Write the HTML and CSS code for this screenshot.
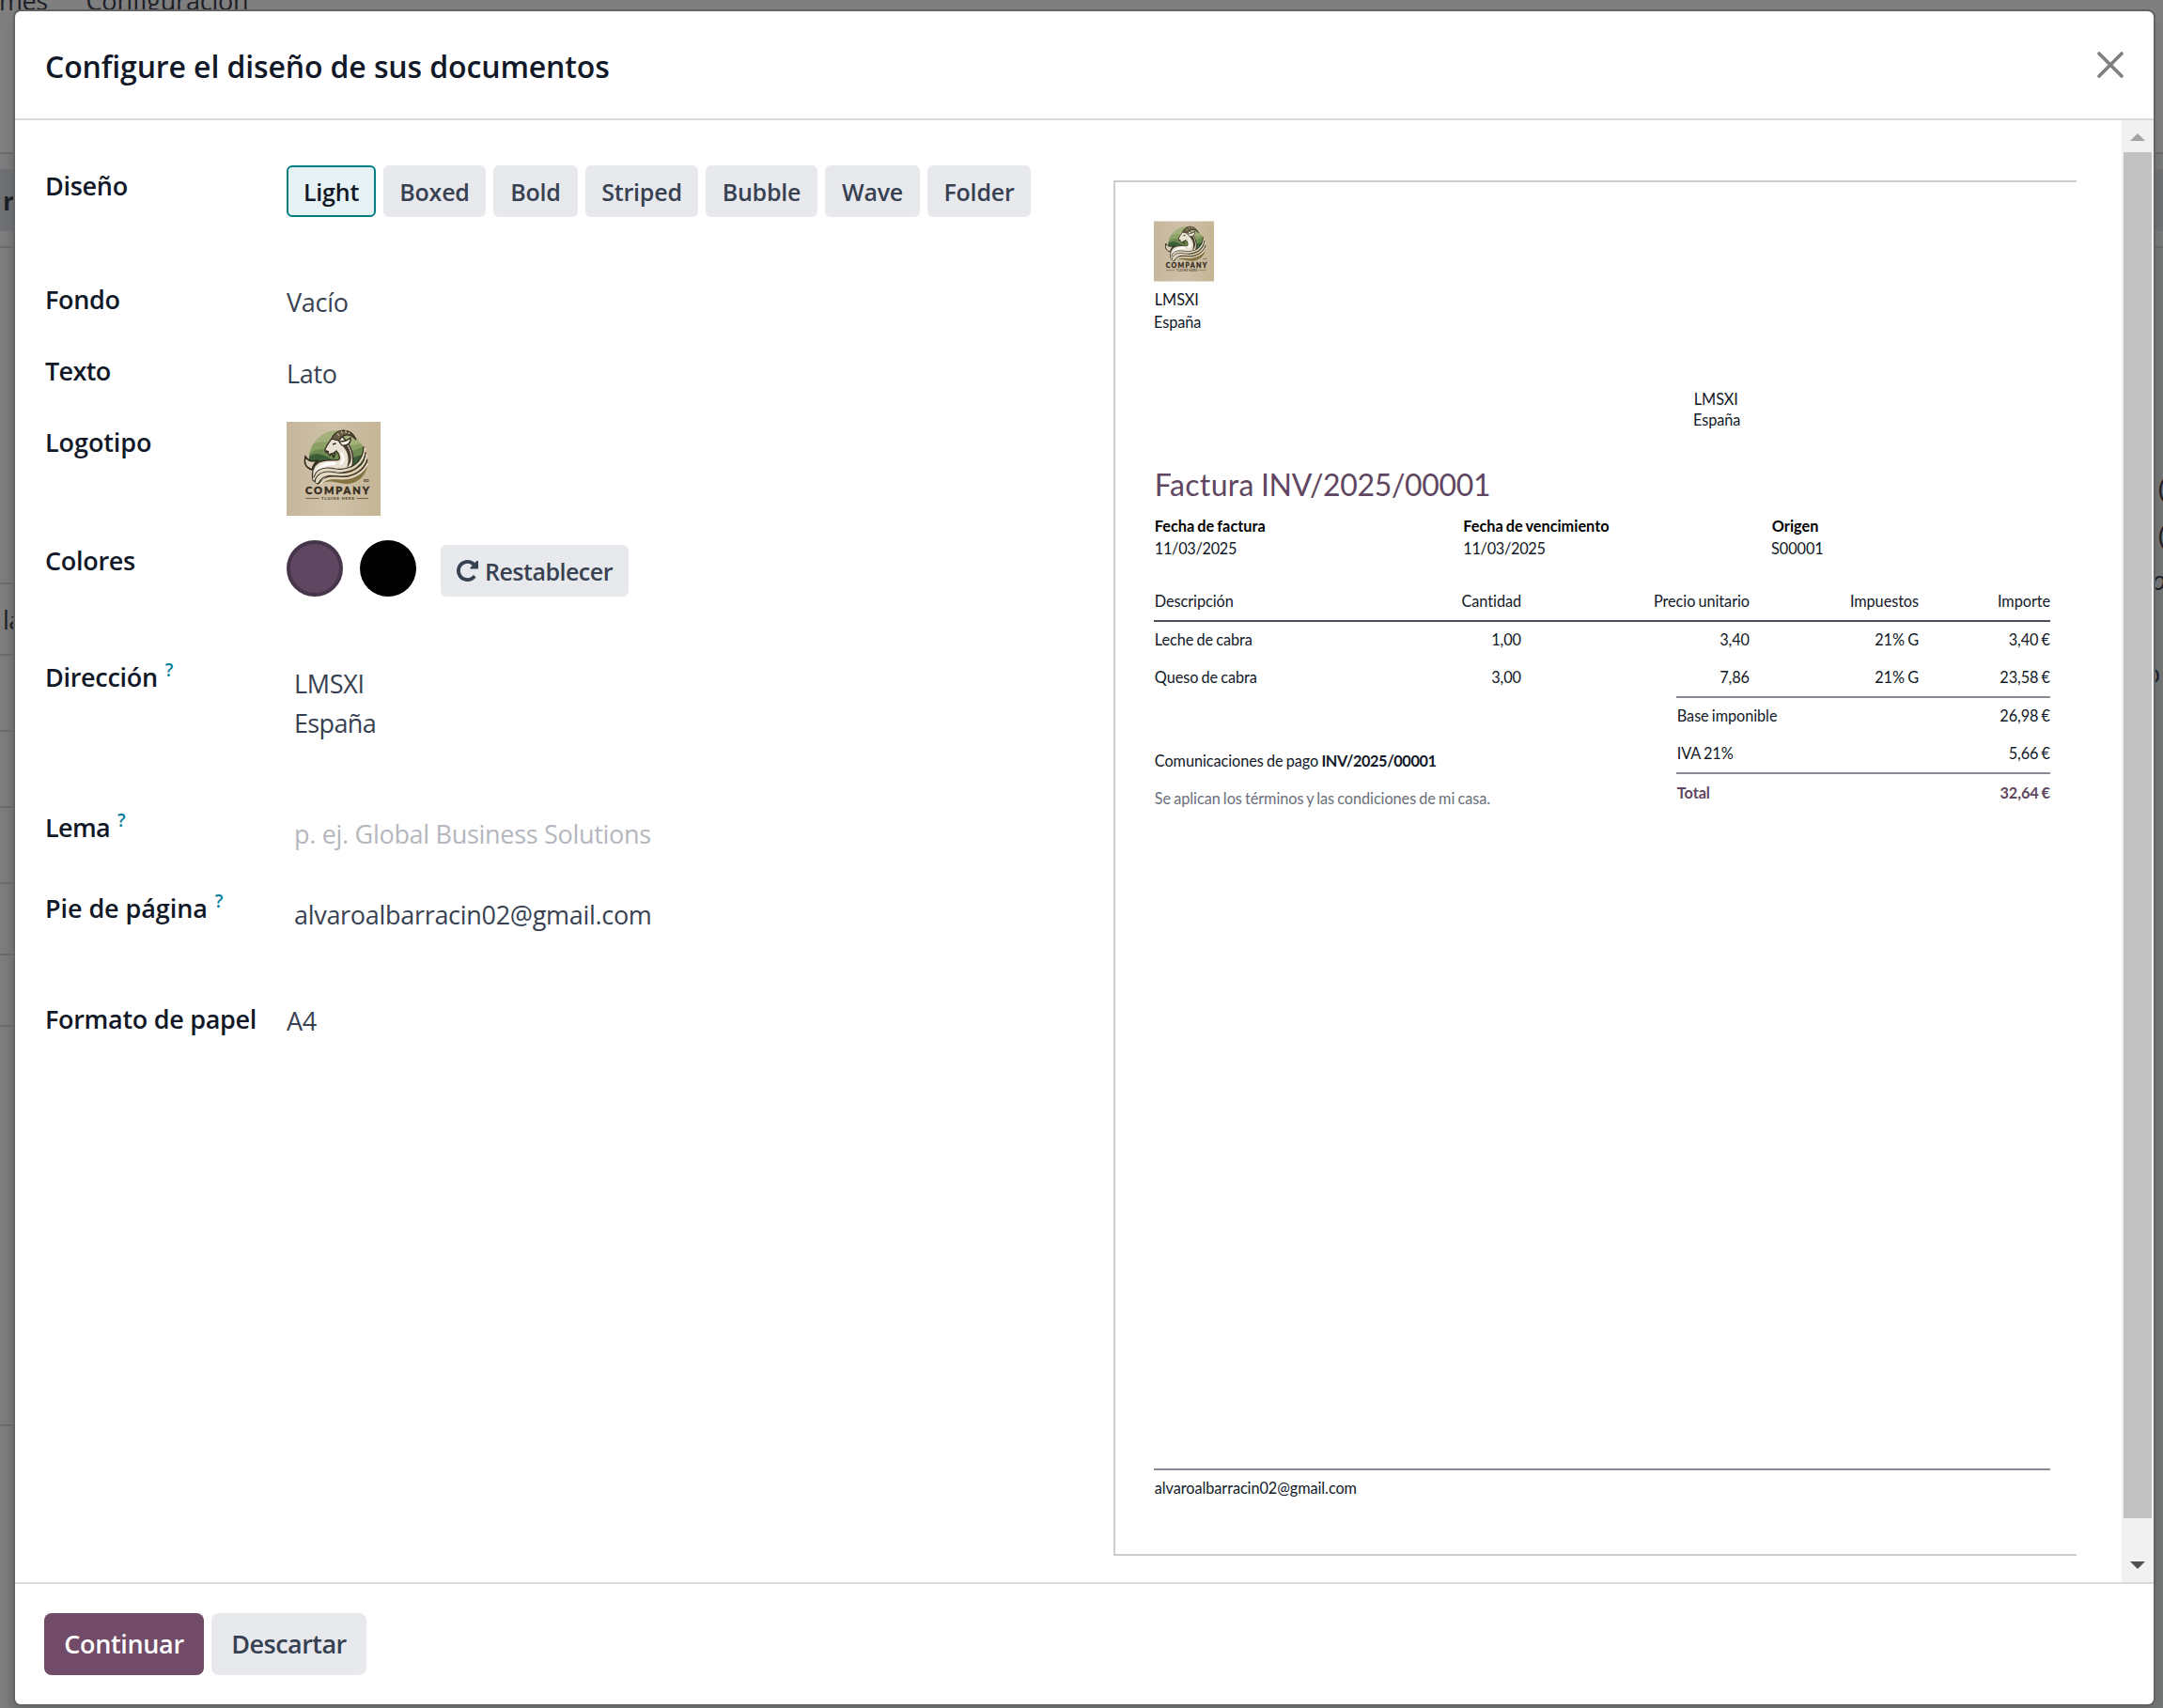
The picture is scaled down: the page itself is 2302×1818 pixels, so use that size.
FILE: index.html
```html
<!DOCTYPE html>
<html lang="es">
<head>
<meta charset="utf-8">
<title>Configure el diseño de sus documentos</title>
<link rel="stylesheet" href="styles.css">
</head>
<body>
<svg class="defs" width="0" height="0" aria-hidden="true">
  <defs>
    <linearGradient id="sand" x1="0" y1="0" x2="1" y2="0">
      <stop offset="0" stop-color="#c6b79c"/><stop offset=".5" stop-color="#cfc1a8"/><stop offset="1" stop-color="#c5b595"/>
    </linearGradient>
    <clipPath id="sun"><circle cx="54" cy="39" r="30"/></clipPath>
    <symbol id="company-logo" viewBox="0 0 100 100">
      <rect width="100" height="100" fill="url(#sand)"/>
      <g clip-path="url(#sun)">
        <rect x="20" y="8" width="70" height="40" fill="#a3b07c"/>
        <path d="M20 28C35 16 50 24 62 25S80 22 90 20V48H20z" fill="#8aa065"/>
        <path d="M20 38C34 22 46 32 60 32S78 26 90 24V48H20z" fill="#6d8a51"/>
        <path d="M20 40C30 30 38 34 48 40S74 34 90 34V48H20z" fill="#3a5f38"/>
      </g>
      <path d="M85 36C90 52 78 67 62 66C52 65 46 61 36 66L34 58L80 46z" fill="#857342"/>
      <path d="M28 62C26 50 30 42 42 41C48 40 54 42 56 40C57 37 56 34 53 31C51 33 49 34 47 34L46 36L44 33C42 33 41 31 41 29C43 25 45 21 49 17C54 13 60 15 63 20C69 27 72 36 70 47C66 54 56 56 46 57L33 66z" fill="#e9e2d3" stroke="#3a3022" stroke-width="1.300"/>
      <path d="M60 26C66 33 67 40 64 49C68 45 70 40 68 33C67 28 64 24 62 22z" fill="#4a3e2d"/>
      <path d="M33 53C36 46 44 44 52 44" fill="none" stroke="#fff" stroke-width="3.500"/>
      <path d="M58 33C62 38 61 42 57 45" fill="none" stroke="#fff" stroke-width="2.200"/>
      <path d="M48 18C52 7 68 5 74 19C68 12 60 12 56 20z" fill="#6a5d45" stroke="#30281c" stroke-width="1.200"/>
      <path d="M54 12l2 3M58 9.500l1.500 3M63 9l0 3M67 11l-1 2" stroke="#d8ccb0" stroke-width="1"/>
      <path d="M56 21C61 21 66 19 68 17C69 22 65 26 59 25z" fill="#f3eee0" stroke="#30281c" stroke-width="1.200"/>
      <path d="M49 24l3.500-1M42 31l3 1M48 34l2 4 2-5" fill="none" stroke="#30281c" stroke-width="1.400"/>
      <path d="M27 51C21 49 18 45 20 37C23 42 27 43 34 41C30 43 28 47 27 51z" fill="#d8ccb5" stroke="#30281c" stroke-width="1.500"/>
      <path d="M29 62C32 50 42 50 52 52C68 54 83 45 83 28M32 65C35 54 44 55 54 56C70 58 84 49 85 35M36 67C39 60 46 59 55 60C70 62 82 54 86 44" fill="none" stroke="#e0d6bf" stroke-width="2.400"/>
      <path d="M29 59C32 48 42 48 52 50C67 52 82 43 82 26M30 63C33 52 43 52 53 54C69 56 84 47 84 32M34 66C37 57 45 57 55 58C70 60 83 52 86 40" fill="none" stroke="#3a3022" stroke-width="1.200"/>
      <text x="20" y="77" textLength="68" class="logo-name">COMPANY</text>
      <text x="37" y="83" textLength="35" class="logo-tag">TLGINE HERE</text>
      <path d="M20.500 81.500H34.500M74.500 81.500H87" stroke="#5a4d38" stroke-width=".8"/>
      <text x="82" y="64" class="logo-mark">EID</text>
    </symbol>
  </defs>
</svg>

<div class="backdrop">
  <div class="bd-nav"><span>mes</span><span>Configuración</span></div>
  <div class="bd-status"><div class="bd-pill bd-pill-l">re</div><div class="bd-pill bd-pill-r"></div></div>
  <div class="bd-sheet">
    <div class="bd-row r1"></div>
    <div class="bd-row r2"><span>la</span></div>
    <div class="bd-row r3"></div>
    <div class="bd-row r4"></div>
    <div class="bd-row r5"></div>
    <div class="bd-row r6"></div>
    <div class="bd-row r7"></div>
    <div class="bd-row r8"></div>
  </div>
  <div class="bd-right"><span>(</span><span>(</span><i>o</i><span class="bd-last">o</span></div>
</div>

<main class="modal">
  <header class="modal-head">
    <h1>Configure el diseño de sus documentos</h1>
    <svg class="close" viewBox="0 0 28 28"><path d="M2 2L26 26M26 2L2 26"/></svg>
  </header>

  <div class="modal-body">
    <section class="form">
      <div class="row row-layout"><label>Diseño</label>
        <div class="choices">
          <button class="btn active">Light</button>
          <button class="btn">Boxed</button>
          <button class="btn">Bold</button>
          <button class="btn">Striped</button>
          <button class="btn">Bubble</button>
          <button class="btn">Wave</button>
          <button class="btn">Folder</button>
        </div>
      </div>
      <div class="row row-plain"><label>Fondo</label><div class="value v3">Vacío</div></div>
      <div class="row row-plain"><label class="tight">Texto</label><div class="value v3">Lato</div></div>
      <div class="row row-logo"><label class="loose">Logotipo</label><svg class="logo-lg"><use href="#company-logo"/></svg></div>
      <div class="row row-colors"><label>Colores</label>
        <div class="colors">
          <span class="swatch primary"></span><span class="swatch secondary"></span>
          <button class="btn reset"><svg viewBox="128 128 1536 1536"><path d="M1664 256v448q0 26-19 45t-45 19h-448q-42 0-59-40-17-39 14-69l138-138Q1097 384 896 384q-104 0-198.500 40.500T534 534 424.500 697.500 384 896t40.500 198.500T534 1258t163.500 109.500T896 1408q119 0 225-52t179-147q7-10 23-12 15 0 25 9l137 138q9 8 9.500 20.500t-7.500 22.500q-109 132-264 204.500T896 1664q-156 0-298-61t-245-164-164-245-61-298 61-298 164-245 245-164 298-61q147 0 284.500 55.500T1425 330l130-129q29-31 70-14 39 17 39 59z"/></svg>Restablecer</button>
        </div>
      </div>
      <div class="row row-address"><label>Dirección<sup>?</sup></label><div class="value inset v7">LMSXI<br><span class="tight">España</span></div></div>
      <div class="row row-tagline"><label class="tight">Lema<sup>?</sup></label><div class="value inset v8 placeholder">p. ej. Global Business Solutions</div></div>
      <div class="row row-footer"><label class="loose">Pie de página<sup>?</sup></label><div class="value inset v7">alvaroalbarracin02@gmail.com</div></div>
      <div class="row"><label>Formato de papel</label><div class="value v2">A4</div></div>
    </section>

    <article class="paper">
      <svg class="logo-sm"><use href="#company-logo"/></svg>
      <address class="company">LMSXI<br>España</address>
      <address class="customer">LMSXI<br>España</address>
      <h2>Factura <span class="doc-number">INV/2025/00001</span></h2>
      <div class="meta">
        <div><b>Fecha de factura</b><span class="date">11/03/2025</span></div>
        <div><b>Fecha de vencimiento</b><span class="date">11/03/2025</span></div>
        <div><b>Origen</b>S00001</div>
      </div>
      <div class="line line-head"><span>Descripción</span><span>Cantidad</span><span>Precio unitario</span><span>Impuestos</span><span>Importe</span></div>
      <div class="line line-first"><span>Leche de cabra</span><span>1,00</span><span>3,40</span><span>21% G</span><span>3,40 €</span></div>
      <div class="line"><span>Queso de cabra</span><span>3,00</span><span>7,86</span><span>21% G</span><span>23,58 €</span></div>
      <div class="summary">
        <div class="notes"><p>Comunicaciones de pago <strong>INV/2025/00001</strong></p><p class="terms">Se aplican los términos y las condiciones de mi casa.</p></div>
        <div class="totals">
          <div class="total-row base"><span>Base imponible</span><span>26,98 €</span></div>
          <div class="total-row"><span>IVA 21%</span><span>5,66 €</span></div>
          <div class="total-row grand"><span>Total</span><span>32,64 €</span></div>
        </div>
      </div>
      <footer>alvaroalbarracin02@gmail.com</footer>
    </article>

    <div class="scrollbar">
      <svg class="arrow up" viewBox="0 0 16 8"><path d="M0 8L8 0L16 8z"/></svg>
      <div class="thumb"></div>
      <svg class="arrow down" viewBox="0 0 16 8"><path d="M0 0L8 8L16 0z"/></svg>
    </div>
  </div>

  <footer class="modal-foot">
    <button class="btn action go">Continuar</button>
    <button class="btn action drop">Descartar</button>
  </footer>
</main>
</body>
</html>
```
FILE: styles.css
```css
* { box-sizing: border-box; }

body {
  margin: 0;
  width: 2302px;
  height: 1818px;
  overflow: hidden;
  position: relative;
  font-family: "Open Sans", "Noto Sans", sans-serif;
  font-size: 27px;
  line-height: 42px;
  color: #374151;
}

h1, h2, p { margin: 0; font-weight: inherit; }
address { font-style: normal; }
.defs { position: absolute; }

/* Dimmed application behind the dialog */
.backdrop {
  position: absolute;
  inset: 0;
  background: linear-gradient(90deg, #7f7f7f 0, #757676 16px, #757776 2292px, #7b7c7c 2302px);
  color: #1d2027;
  letter-spacing: -.5px;
}
.bd-nav {
  display: flex;
  gap: 41px;
  height: 162px;
  background: #7f7f7f;
}
.bd-nav span { margin-top: -20px; height: 42px; }
.bd-nav span:first-child { margin-left: -1px; }
.bd-nav span + span { letter-spacing: -.2px; }
.bd-status {
  display: flex;
  justify-content: space-between;
  height: 102px;
  padding: 16px 0;
  border: solid #6b6c6e;
  border-width: 2px 0;
}
.bd-pill {
  width: 60px;
  height: 66px;
  background: #707175;
  font-weight: 700;
  line-height: 68px;
  padding-left: 3px;
  letter-spacing: -1.500px;
}
.bd-pill-r { width: 9px; border-radius: 6px 0 0 6px; }
.bd-row { border-bottom: 2px solid #6b6c6e; padding-left: 3px; }
.r1 { height: 358px; }
.r2 { height: 76px; line-height: 76px; }
.r3, .r4, .r5 { height: 81px; }
.r6 { height: 76px; }
.r7 { height: 76px; }
.r8 { height: 425px; }
.bd-right {
  position: absolute;
  top: 264px;
  right: 0;
  bottom: 0;
  width: 12px;
  padding-top: 235px;
  overflow: hidden;
  background: #757776;
  display: flex;
  flex-direction: column;
}
.bd-right span, .bd-right i { height: 50px; }
.bd-right i { margin-top: -2px; }
.bd-right span { padding-left: 7px; }
.bd-right .bd-last { margin: 49px 0 0 -14px; }

/* Dialog */
.modal {
  position: absolute;
  left: 16px;
  top: 12px;
  width: 2276px;
  height: 1802px;
  display: flex;
  flex-direction: column;
  background: #fff;
  border-radius: 6px;
  box-shadow: 0 0 0 2px #626363, 0 8px 16px rgba(0, 0, 0, .15);
}
.modal-head {
  display: flex;
  justify-content: space-between;
  align-items: center;
  height: 116px;
  padding: 0 32px;
  border-bottom: 2px solid #d8dadd;
  color: #111827;
}
.modal-head h1 { padding-top: 3px; font-size: 32px; font-weight: 600; line-height: 40px; letter-spacing: -.120px; }
.close { width: 28px; height: 28px; fill: none; stroke: #7f7f7f; stroke-width: 3.600; stroke-linecap: round; }

.modal-body { display: flex; flex: 1; }
.form { width: 1169px; padding: 48px 0 0 32px; letter-spacing: -.3px; }
.row { display: grid; grid-template-columns: 257px 1fr; align-items: start; }
.row-layout { height: 121px; }
.row-plain { height: 76px; }
.row-logo { height: 126px; }
.row-colors { height: 124px; }
.row-address { height: 160px; }
.row-tagline { height: 86px; }
.row-footer { height: 118px; }
label { padding-top: 1px; font-weight: 600; color: #111827; white-space: nowrap; }
sup { margin-left: 8px; font-size: 19px; line-height: 0; color: #017e9b; vertical-align: 11px; }
.v2 { padding-top: 3px; }
.v3 { padding-top: 4px; }
.v7 { padding-top: 8px; }
.v8 { padding-top: 8px; }
.inset { padding-left: 8px; }
.tight { letter-spacing: -.650px; }
.loose { letter-spacing: -.080px; }
.placeholder { color: #b4b7bd; }

.btn {
  display: flex;
  align-items: center;
  justify-content: center;
  height: 55px;
  padding: 0;
  border: 0;
  border-radius: 6px;
  background: #e7e9ed;
  color: #374151;
  font: 600 25px/38px "Open Sans", "Noto Sans", sans-serif;
  letter-spacing: -.2px;
}
.btn.active { background: #e6f2f3; border: 2px solid #017e84; color: #111827; }
.choices {
  display: grid;
  grid-template-columns: 95px 109px 90px 120px 119px 101px 110px;
  gap: 8px;
}
.logo-lg { width: 100px; height: 100px; }
.logo-name { font: 900 11px Lato, sans-serif; letter-spacing: 0; fill: #33291b; stroke: #33291b; stroke-width: .4px; }
.logo-tag { font: 700 4.500px Lato, sans-serif; letter-spacing: 0; fill: #4a3e2c; }
.logo-mark { font: 700 3.500px Lato, sans-serif; letter-spacing: 0; fill: #33291b; }
.colors { display: flex; }
.swatch { width: 60px; height: 60px; margin-right: 18px; border-radius: 50%; }
.primary { background: #5f4661; border: 4px solid #47354b; }
.secondary { background: #000; }
.reset { width: 200px; margin: 5px 0 0 8px; gap: 7px; letter-spacing: -.5px; }
.reset svg { width: 23px; height: 23px; fill: #374151; }

/* Document preview */
.paper {
  display: flex;
  flex-direction: column;
  width: 1025px;
  height: 1464px;
  margin-top: 64px;
  padding: 41px 28px 55px 41px;
  border: solid #ccc;
  border-width: 2px 0 2px 2px;
  font: 16.300px/24px Lato, sans-serif;
  word-spacing: -.9px;
  letter-spacing: -.070px;
  text-indent: .8px;
  color: #111827;
}
.logo-sm { flex: none; width: 64px; height: 65px; }
.company { margin-top: 6.500px; }
.customer { margin: 59.500px 0 0 574px; height: 45px; line-height: 22px; }
.paper h2 { margin-top: 37px; font-size: 32px; line-height: 40px; color: #5f4661; letter-spacing: .350px; word-spacing: -1.500px; }
.doc-number { letter-spacing: -.330px; }
.date { display: block; letter-spacing: -.3px; }
.meta { display: grid; grid-template-columns: 328.500px 328.500px 1fr; margin: 12px 0 24px; }
.meta b { display: block; color: #000; letter-spacing: 0; }
.line { display: grid; grid-template-columns: 237px 154px 243px 180px 140px; line-height: 40px; }
.line span + span { text-align: right; }
.line-head { border-bottom: 2px solid #4c4e5b; }
.line-first { height: 39px; line-height: 37px; }
.summary { display: flex; justify-content: space-between; line-height: 40px; }
.notes { padding-top: 49px; }
.notes strong { letter-spacing: -.4px; }
.terms { color: #6b6f7a; }
.totals { width: 398px; }
.total-row { display: flex; justify-content: space-between; }
.base { height: 41px; line-height: 37px; border-top: 2px solid #888b93; }
.grand { border-top: 2px solid #888b93; font-weight: 700; color: #5f4661; }
.paper footer { margin-top: auto; padding-top: 5px; padding-bottom: 1px; border-top: 2px solid #888b93; line-height: 28px; }

.scrollbar {
  display: flex;
  flex-direction: column;
  align-items: center;
  width: 34px;
  margin-left: auto;
  padding: 14px 0;
  background: #f1f1f1;
}
.arrow { width: 16px; height: 8px; }
.up { fill: #a3a3a3; }
.down { margin-top: auto; fill: #505050; }
.thumb { width: 30px; height: 1454px; margin-top: 12px; background: #c1c1c1; }

.modal-foot {
  display: flex;
  gap: 8px;
  height: 130px;
  padding: 31px;
  border-top: 2px solid #d8dadd;
}
.action { height: 66px; font-size: 27px; border-radius: 8px; letter-spacing: -.350px; }
.go { width: 170px; background: #714b67; color: #fff; }
.drop { width: 165px; letter-spacing: -.550px; }
```
